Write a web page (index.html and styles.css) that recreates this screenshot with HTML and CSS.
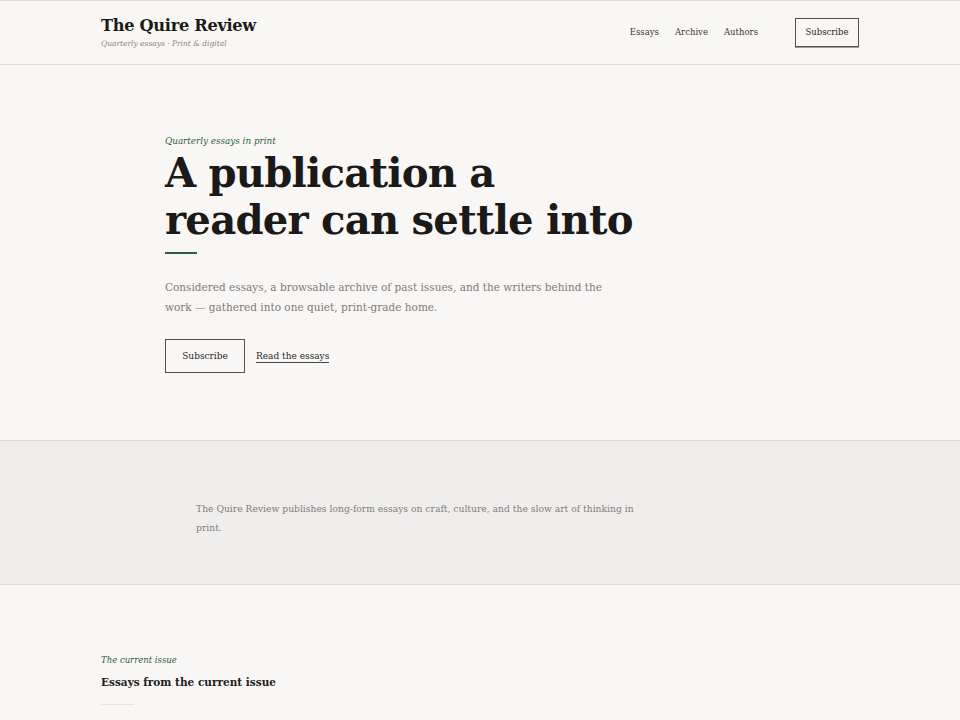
FILE: index.html
```html
<!DOCTYPE html>
<html lang="en">
<head>
<meta charset="utf-8">
<title>The Quire Review</title>
<link rel="stylesheet" href="styles.css">
</head>
<body>
<header class="site-header">
  <div class="wrap header-inner">
    <div class="brand">
      <div class="brand-name">The Quire Review</div>
      <div class="brand-tag">Quarterly essays · Print &amp; digital</div>
    </div>
    <nav class="nav">
      <a class="nav-link" href="#">Essays</a>
      <a class="nav-link" href="#">Archive</a>
      <a class="nav-link" href="#">Authors</a>
      <a class="btn btn-small" href="#">Subscribe</a>
    </nav>
  </div>
</header>

<section class="hero">
  <div class="hero-inner">
    <p class="eyebrow eyebrow-hero">Quarterly essays in print</p>
    <h1 class="hero-title">A publication a<br>reader can settle into</h1>
    <div class="rule"></div>
    <p class="lede">Considered essays, a browsable archive of past issues, and the writers behind the work — gathered into one quiet, print-grade home.</p>
    <div class="actions">
      <a class="btn btn-hero" href="#">Subscribe</a>
      <a class="text-link" href="#">Read the essays</a>
    </div>
  </div>
</section>

<section class="band">
  <div class="band-card">
    <p class="band-text">The Quire Review publishes long-form essays on craft, culture, and the slow art of thinking in print.</p>
  </div>
</section>

<section class="issue">
  <div class="wrap">
    <p class="eyebrow">The current issue</p>
    <h2 class="section-title">Essays from the current issue</h2>
    <div class="rule rule-light"></div>
  </div>
</section>
</body>
</html>
```

FILE: styles.css
```css
* { box-sizing: border-box; }
html, body { margin: 0; padding: 0; }
body {
  background: #f8f7f4;
  color: #1d1c1a;
  font-family: "DejaVu Serif", Georgia, serif;
}
a { color: inherit; text-decoration: none; }
p { margin: 0; }

.wrap {
  width: 760px;
  margin: 0 auto;
  padding-left: 1px;
}

.site-header {
  border-top: 1px solid #dedcd8;
  border-bottom: 1px solid #dedcd8;
  background: #f8f7f4;
}
.header-inner {
  height: 63px;
  display: flex;
  align-items: center;
  justify-content: space-between;
}
.brand {
  padding-bottom: 2px;
}
.brand-name {
  font-size: 16.2px;
  font-weight: bold;
  letter-spacing: -0.3px;
  line-height: 22px;
  color: #1b1a18;
}
.brand-tag {
  font-size: 7.5px;
  font-style: italic;
  color: #8a8580;
  margin-top: 2px;
}
.nav {
  display: flex;
  align-items: center;
  padding-right: 1px;
  padding-bottom: 1px;
}
.nav-link {
  font-size: 8.5px;
  color: #3a3835;
  margin-right: 16px;
}
.nav-link:nth-child(3) { margin-right: 37px; }
.btn {
  display: inline-flex;
  align-items: center;
  justify-content: center;
  border: 1px solid #55524e;
  color: #2a2826;
}
.btn-small {
  width: 64px;
  height: 29px;
  font-size: 8.5px;
  box-shadow: 0 1px 0 #a19d98;
}

.hero {
  background: #f9f7f5;
  border-bottom: 1px solid #dad8d4;
}
.hero-inner {
  width: 760px;
  margin: 0 auto;
  padding: 70px 0 67px 65px;
}
.eyebrow {
  font-size: 8.5px;
  font-style: italic;
  color: #2f5c3f;
  line-height: 12px;
}
.eyebrow-hero {
  font-size: 8.8px;
}
.hero-title {
  margin: 2px 0 0;
  font-size: 40.2px;
  line-height: 47px;
  font-weight: bold;
  letter-spacing: -0.8px;
  color: #1b1a18;
}
.rule {
  width: 32px;
  height: 2px;
  background: #2f5c3f;
  margin-top: 9px;
}
.lede {
  margin-top: 23px;
  max-width: 450px;
  font-size: 10.5px;
  line-height: 20px;
  color: #7f7a76;
}
.actions {
  margin-top: 22px;
  display: flex;
  align-items: center;
}
.btn-hero {
  width: 80px;
  height: 34px;
  font-size: 9px;
  margin-right: 11px;
}
.text-link {
  font-size: 9px;
  color: #2a2826;
  border-bottom: 1px solid #4a4744;
  padding-bottom: 1px;
  margin-top: 2px;
}

.band {
  background: #efeeec;
  border-bottom: 1px solid #dad8d4;
  height: 144px;
}
.band-card {
  width: 478px;
  margin-left: 163px;
  height: 143px;
  background: #f0eeed;
  padding: 58px 0 0 33px;
}
.band-text {
  font-size: 9.2px;
  line-height: 19px;
  color: #817c78;
}

.issue {
  background: #f9f7f5;
  padding-top: 69px;
  height: 140px;
}
.section-title {
  margin: 9px 0 0;
  font-size: 10.5px;
  line-height: 15px;
  font-weight: bold;
  color: #222120;
}
.rule-light {
  background: #e6e4e0;
  height: 1px;
  width: 33px;
  margin-top: 14px;
}
```
